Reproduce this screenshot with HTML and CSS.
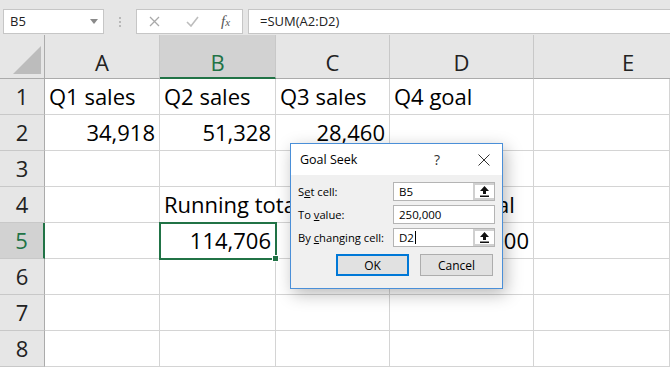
FILE: index.html
```html
<!DOCTYPE html>
<html lang="en">
<head>
    <meta charset="UTF-8">
    <meta name="viewport" content="width=device-width, initial-scale=1.0">
    <title>Goal Seek</title>
    <link rel="stylesheet" href="styles.css">
</head>
<body>
    <div class="formula-bar">
        <div class="name-box">
            <span>B5</span>
            <svg class="drop" width="8" height="5" viewBox="0 0 8 5"><path d="M0 0h8L4 5z" fill="#8a8a8a"/></svg>
        </div>
        <div class="grip"><i></i><i></i><i></i></div>
        <div class="fx-buttons">
            <svg width="11" height="11" viewBox="0 0 11 11"><path d="M1 1l9 9M10 1l-9 9" stroke="#a9a9a9" stroke-width="1.3" fill="none"/></svg>
            <svg width="13" height="11" viewBox="0 0 13 11"><path d="M1 6l4 4 7-9" stroke="#bdbdbd" stroke-width="1.6" fill="none"/></svg>
            <span class="fx">f<small>x</small></span>
        </div>
        <div class="formula">=SUM(A2:D2)</div>
    </div>

    <div class="sheet">
        <div class="corner">
            <svg width="28" height="28" viewBox="0 0 28 28"><path d="M28 0V28H0z" fill="#bcbcbc"/></svg>
        </div>
        <div class="col-head">A</div>
        <div class="col-head active">B</div>
        <div class="col-head">C</div>
        <div class="col-head">D</div>
        <div class="col-head edge">E</div>

        <div class="row-head">1</div>
        <div class="cell">Q1 sales</div>
        <div class="cell">Q2 sales</div>
        <div class="cell">Q3 sales</div>
        <div class="cell">Q4 goal</div>
        <div class="cell"></div>

        <div class="row-head">2</div>
        <div class="cell num">34,918</div>
        <div class="cell num">51,328</div>
        <div class="cell num">28,460</div>
        <div class="cell"></div>
        <div class="cell"></div>

        <div class="row-head">3</div>
        <div class="cell"></div>
        <div class="cell"></div>
        <div class="cell"></div>
        <div class="cell"></div>
        <div class="cell"></div>

        <div class="row-head">4</div>
        <div class="cell"></div>
        <div class="cell spill">Running total</div>
        <div class="cell"></div>
        <div class="cell">Annual goal</div>
        <div class="cell"></div>

        <div class="row-head active">5</div>
        <div class="cell"></div>
        <div class="cell num selected">114,706</div>
        <div class="cell"></div>
        <div class="cell num">250,000</div>
        <div class="cell"></div>

        <div class="row-head">6</div>
        <div class="cell"></div>
        <div class="cell"></div>
        <div class="cell"></div>
        <div class="cell"></div>
        <div class="cell"></div>

        <div class="row-head">7</div>
        <div class="cell"></div>
        <div class="cell"></div>
        <div class="cell"></div>
        <div class="cell"></div>
        <div class="cell"></div>

        <div class="row-head">8</div>
        <div class="cell"></div>
        <div class="cell"></div>
        <div class="cell"></div>
        <div class="cell"></div>
        <div class="cell"></div>
    </div>

    <div class="dialog">
        <div class="dialog-title">
            <span class="title-text">Goal Seek</span>
            <span class="help">?</span>
            <svg class="close" width="12" height="12" viewBox="0 0 12 12"><path d="M0.5 0.5l11 11M11.5 0.5l-11 11" stroke="#333" stroke-width="1" fill="none"/></svg>
        </div>
        <div class="dialog-body">
            <div class="field">
                <label>S<u>e</u>t cell:</label>
                <div class="input">
                    <span>B5</span>
                    <span class="pick"><svg width="9" height="11" viewBox="0 0 9 11"><path d="M4.5 0L9 5H6v3H3V5H0z M0 9.5h9v1.5H0z" fill="#111"/></svg></span>
                </div>
            </div>
            <div class="field">
                <label>To <u>v</u>alue:</label>
                <div class="input"><span>250,000</span></div>
            </div>
            <div class="field">
                <label>By <u>c</u>hanging cell:</label>
                <div class="input">
                    <span>D2<i class="caret"></i></span>
                    <span class="pick"><svg width="9" height="11" viewBox="0 0 9 11"><path d="M4.5 0L9 5H6v3H3V5H0z M0 9.5h9v1.5H0z" fill="#111"/></svg></span>
                </div>
            </div>
            <div class="actions">
                <button class="primary">OK</button>
                <button>Cancel</button>
            </div>
        </div>
    </div>
</body>
</html>
```

FILE: styles.css
```css
body {
    margin: 0;
    width: 670px;
    height: 369px;
    overflow: hidden;
    background: #fff;
    font-family: "Open Sans", "Liberation Sans", sans-serif;
    color: #000;
    position: relative;
}
.formula-bar {
    display: flex;
    align-items: flex-start;
    height: 35px;
    padding: 9px 0 0 3px;
    box-sizing: border-box;
    background: #e6e6e6;
}
.name-box, .fx-buttons, .formula {
    height: 25px;
    box-sizing: border-box;
    background: #fff;
    border: 1px solid #c6c6c6;
    font-size: 13px;
    line-height: 23px;
}
.name-box {
    width: 101px;
    display: flex;
    justify-content: space-between;
    align-items: center;
    padding: 0 5px 0 6px;
    color: #222;
}
.grip {
    width: 32px;
    height: 25px;
    display: flex;
    flex-direction: column;
    align-items: center;
    justify-content: center;
    gap: 2px;
}
.grip i {
    width: 2px;
    height: 2px;
    background: #b8b8b8;
}
.fx-buttons {
    width: 107px;
    display: flex;
    align-items: center;
    padding: 0 0 0 12px;
    gap: 26px;
}
.fx {
    font-family: "Liberation Serif", serif;
    font-style: italic;
    font-size: 15px;
    color: #555;
    margin-left: -4px;
}
.fx small {
    font-size: 11px;
}
.formula {
    flex: 1;
    margin-left: 5px;
    border-right: none;
    padding-left: 11px;
    color: #222;
}

.sheet {
    display: grid;
    grid-template-columns: 45px 115px 116px 114px 144px 136px;
    grid-template-rows: 44px repeat(8, 36px);
    font-size: 22px;
}
.corner, .col-head, .row-head, .cell {
    box-sizing: border-box;
    white-space: nowrap;
}
.corner {
    background: #e6e6e6;
    border-right: 1px solid #ababab;
    border-bottom: 1px solid #ababab;
    display: flex;
    justify-content: flex-end;
    align-items: flex-end;
    padding: 0 3px 4px 0;
}
.col-head {
    background: #e6e6e6;
    border-right: 1px solid #c8c8c8;
    border-bottom: 1px solid #ababab;
    text-align: center;
    padding-top: 12px;
    line-height: 31px;
    color: #222;
}
.col-head.edge {
    border-right: none;
    padding-left: 52px;
}
.row-head {
    background: #e6e6e6;
    border-right: 1px solid #ababab;
    border-bottom: 1px solid #c8c8c8;
    text-align: center;
    line-height: 35px;
    color: #222;
}
.col-head.active {
    background: #d2d2d2;
    color: #217346;
    border-bottom: 2px solid #217346;
}
.row-head.active {
    background: #d2d2d2;
    color: #217346;
    border-right: 2px solid #217346;
}
.cell {
    border-right: 1px solid #d4d4d4;
    border-bottom: 1px solid #d4d4d4;
    line-height: 35px;
    padding: 0 4px;
}
.cell.num {
    text-align: right;
    direction: rtl;
}
.cell.spill {
    border-right: none;
}
.cell.selected {
    position: relative;
    z-index: 1;
    outline: 2px solid #217346;
    outline-offset: -1px;
}
.cell.selected::after {
    content: "";
    position: absolute;
    right: -4px;
    bottom: -4px;
    width: 5px;
    height: 5px;
    background: #217346;
    border: 1px solid #fff;
}

.dialog {
    position: absolute;
    left: 290px;
    top: 143px;
    width: 213px;
    height: 146px;
    box-sizing: border-box;
    border: 1px solid #4a8fd8;
    background: #f0f0f0;
    box-shadow: 3px 5px 16px rgba(0, 0, 0, 0.28);
    z-index: 2;
    font-size: 11.2px;
    color: #000;
}
.dialog-title {
    height: 31px;
    background: #fff;
    display: flex;
    align-items: center;
    padding: 0 12px 0 9px;
}
.title-text {
    flex: 1;
    font-size: 12.5px;
}
.help {
    font-size: 14px;
    margin-right: 38px;
    color: #333;
}
.dialog-body {
    padding: 7px 7px 0 7px;
}
.field {
    display: flex;
    align-items: center;
    height: 19px;
    margin-bottom: 4px;
}
.field label {
    width: 95px;
    white-space: nowrap;
}
.input {
    flex: 1;
    height: 19px;
    box-sizing: border-box;
    background: #fff;
    border: 1px solid #b4b4b4;
    display: flex;
    align-items: center;
    justify-content: space-between;
    padding-left: 5px;
    font-size: 11.5px;
}
.caret {
    display: inline-block;
    width: 1px;
    height: 13px;
    background: #000;
    vertical-align: -2px;
    margin-left: 1px;
}
.pick {
    width: 21px;
    height: 17px;
    box-sizing: border-box;
    border: 2px solid #d0d0d0;
    border-right: none;
    background: #fff;
    display: flex;
    align-items: center;
    justify-content: center;
}
.actions {
    display: flex;
    justify-content: flex-end;
    gap: 11px;
    margin-top: 7px;
    padding-right: 2px;
}
.actions button {
    width: 73px;
    height: 22px;
    box-sizing: border-box;
    background: #e1e1e1;
    border: 1px solid #adadad;
    font-family: inherit;
    font-size: 12px;
    color: #000;
    padding: 0;
}
.actions button.primary {
    border: 2px solid #0078d7;
}
```
